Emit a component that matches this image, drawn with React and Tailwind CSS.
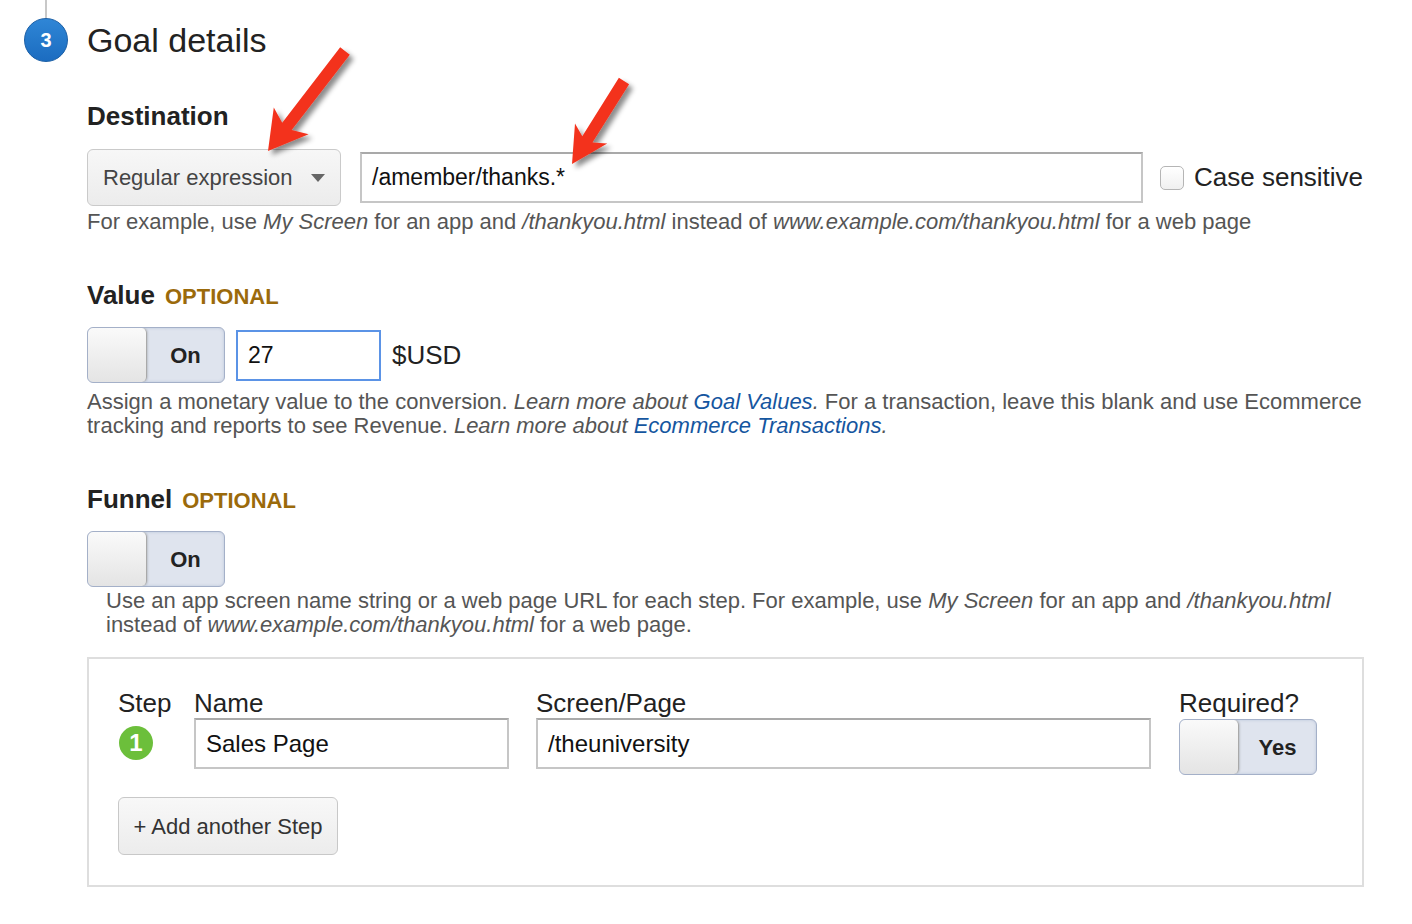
import React from 'react';

const font = { fontFamily: '"Liberation Sans", Arial, sans-serif' };

function arrowPoints(tail, tip, opts) {
  const { w = 6, h = 34, hw = 20, notch = 5 } = opts || {};
  const dx = tip[0] - tail[0];
  const dy = tip[1] - tail[1];
  const len = Math.hypot(dx, dy);
  const ux = dx / len, uy = dy / len;
  const nx = -uy, ny = ux;
  const bx = tip[0] - ux * h, by = tip[1] - uy * h;
  const cx = tip[0] - ux * (h - notch), cy = tip[1] - uy * (h - notch);
  const pts = [
    [tail[0] + nx * w, tail[1] + ny * w],
    [cx + nx * w, cy + ny * w],
    [bx + nx * hw, by + ny * hw],
    tip,
    [bx - nx * hw, by - ny * hw],
    [cx - nx * w, cy - ny * w],
    [tail[0] - nx * w, tail[1] - ny * w],
  ];
  return pts.map(p => p[0].toFixed(1) + ',' + p[1].toFixed(1)).join(' ');
}

function Arrows() {
  return (
    <svg className="pointer-events-none absolute left-0 top-0" width="1412" height="924">
      <defs>
        <filter id="sh" x="-20%" y="-20%" width="140%" height="140%">
          <feDropShadow dx="4" dy="4" stdDeviation="2.5" floodColor="#000" floodOpacity="0.45" />
        </filter>
      </defs>
      <polygon points={arrowPoints([345, 51], [268, 151], { w: 6, h: 38, hw: 22, notch: 7 })} fill="#f3321c" filter="url(#sh)" />
      <polygon points={arrowPoints([624, 81], [572, 164], { w: 6, h: 36, hw: 19, notch: 7 })} fill="#f3321c" filter="url(#sh)" />
    </svg>
  );
}

function Toggle({ label }) {
  return (
    <div className="flex h-[56px] w-[138px] overflow-hidden rounded-[6px] border border-[#a4b0c8] bg-[#dfe4ee] shadow-[inset_0_0_3px_rgba(120,140,180,0.35)]">
      <div className="h-full w-[59px] rounded-[5px] border-r border-[#a9a9a9] bg-gradient-to-b from-[#fafafa] to-[#e4e4e4] shadow-[1px_0_2px_rgba(0,0,0,0.15)]" />
      <div className="flex flex-1 items-center justify-center text-[22px] font-bold text-[#222]">{label}</div>
    </div>
  );
}

function Heading({ title, optional }) {
  return (
    <div className="flex h-[28px] items-baseline gap-[10px] leading-[28px]">
      <span className="text-[26px] font-bold text-[#222]">{title}</span>
      {optional && <span className="text-[22px] font-bold text-[#9b6a0b]">OPTIONAL</span>}
    </div>
  );
}

const inputCls = 'h-[51px] border-2 border-[#c6c6c6] border-t-[#a9a9a9] bg-white px-[10px] flex items-center text-[#111]';

export default function App() {
  return (
    <div className="relative h-[924px] w-[1412px] overflow-hidden bg-white" style={font}>
      {/* header */}
      <div className="flex h-[62px]">
        <div className="flex w-[87px] flex-col items-start pl-[24px]">
          <div className="ml-[21px] h-[18px] w-[2px] bg-[#c8c8c8]" />
          <div className="flex h-[44px] w-[44px] items-center justify-center rounded-full border border-[#1b5fa6] bg-gradient-to-b from-[#2f86d6] to-[#1b6cc0] text-[20px] font-bold text-white">3</div>
        </div>
        <div className="flex items-end text-[34px] leading-[44px] text-[#222]">Goal details</div>
      </div>

      <div className="ml-[87px] w-[1280px]">
        {/* Destination */}
        <div className="mt-[40px]">
          <Heading title="Destination" />
        </div>
        <div className="mt-[19px] flex h-[57px] items-center">
          <div className="flex h-[57px] w-[254px] items-center justify-between rounded-[6px] border border-[#cacaca] bg-gradient-to-b from-[#f7f7f7] to-[#ececec] pl-[15px] pr-[15px] text-[22px] text-[#444]">
            <span>Regular expression</span>
            <svg width="14" height="8" viewBox="0 0 14 8"><path d="M0 0h14L7 8z" fill="#666" /></svg>
          </div>
          <div className={inputCls + ' ml-[19px] w-[783px] text-[23px]'}>/amember/thanks.*</div>
          <div className="ml-[17px] h-[24px] w-[24px] rounded-[5px] border-[1.5px] border-[#b5b5b5] bg-gradient-to-b from-white to-[#f0f0f0]" />
          <span className="ml-[10px] text-[26px] text-[#222]">Case sensitive</span>
        </div>
        <p className="mt-[4px] whitespace-nowrap text-[22px] leading-[24px] text-[#555]">
          For example, use <i>My Screen</i> for an app and <i>/thankyou.html</i> instead of <i>www.example.com/thankyou.html</i> for a web page
        </p>

        {/* Value */}
        <div className="mt-[47px]">
          <Heading title="Value" optional />
        </div>
        <div className="mt-[18px] flex h-[56px] items-center">
          <Toggle label="On" />
          <div className="ml-[11px] flex h-[51px] w-[145px] items-center border-2 border-[#5b93e6] bg-white px-[10px] text-[23px] text-[#111]">27</div>
          <span className="ml-[11px] text-[26px] text-[#222]">$USD</span>
        </div>
        <p className="mt-[7px] whitespace-nowrap text-[22px] leading-[24px] text-[#555]">
          Assign a monetary value to the conversion. <i>Learn more about <span className="text-[#15569f]">Goal Values</span>.</i> For a transaction, leave this blank and use Ecommerce
          <br />
          tracking and reports to see Revenue. <i>Learn more about <span className="text-[#15569f]">Ecommerce Transactions</span>.</i>
        </p>

        {/* Funnel */}
        <div className="mt-[47px]">
          <Heading title="Funnel" optional />
        </div>
        <div className="mt-[18px]">
          <Toggle label="On" />
        </div>
        <p className="ml-[19px] mt-[2px] whitespace-nowrap text-[22px] leading-[24px] text-[#555]">
          Use an app screen name string or a web page URL for each step. For example, use <i>My Screen</i> for an app and <i>/thankyou.html</i>
          <br />
          instead of <i>www.example.com/thankyou.html</i> for a web page.
        </p>

        <div className="mt-[20px] w-[1277px] border-2 border-[#dedede] pb-[30px] pl-[29px] pt-[30px]">
          <div className="flex">
            <div className="w-[76px]">
              <div className="text-[26px] leading-[28px] text-[#222]">Step</div>
              <div className="ml-[1px] mt-[9px] flex h-[34px] w-[34px] items-center justify-center rounded-full bg-[#6cbf3b] text-[24px] font-bold text-white">1</div>
            </div>
            <div className="w-[315px]">
              <div className="text-[26px] leading-[28px] text-[#222]">Name</div>
              <div className={inputCls + ' mt-[1px] text-[24px]'}>Sales Page</div>
            </div>
            <div className="ml-[27px] w-[615px]">
              <div className="text-[26px] leading-[28px] text-[#222]">Screen/Page</div>
              <div className={inputCls + ' mt-[1px] text-[24px]'}>/theuniversity</div>
            </div>
            <div className="ml-[28px]">
              <div className="text-[26px] leading-[28px] text-[#222]">Required?</div>
              <div className="mt-[2px]">
                <Toggle label="Yes" />
              </div>
            </div>
          </div>
          <div className="mt-[22px] flex h-[58px] w-[220px] items-center justify-center rounded-[6px] border border-[#c8c8c8] bg-gradient-to-b from-[#f8f8f8] to-[#ececec] text-[22px] text-[#333]">
            + Add another Step
          </div>
        </div>
      </div>

      <Arrows />
    </div>
  );
}
